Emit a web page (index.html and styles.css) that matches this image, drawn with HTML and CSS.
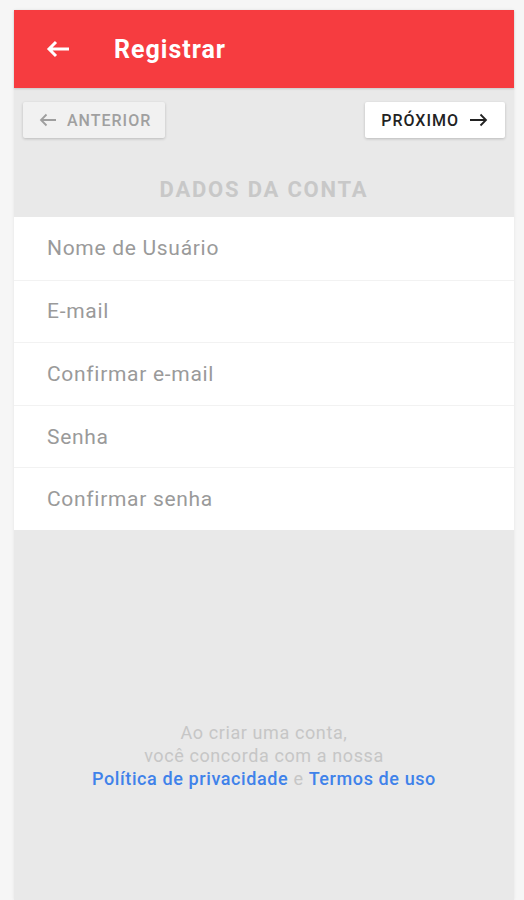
FILE: index.html
```html
<!DOCTYPE html>
<html>

<head>
    <meta charset="UTF-8" />
    <title>Registrar</title>
    <link rel="stylesheet" href="styles.css">
</head>

<body>
    <div class="screen">
        <header class="appbar">
            <svg class="back" width="24" height="18" viewBox="0 0 24 18">
                <path d="M23 9H3 M10 2L3 9l7 7" fill="none" stroke="#fff" stroke-width="3" />
            </svg>
            <span class="title">Registrar</span>
        </header>

        <div class="nav">
            <button class="btn prev">
                <svg width="17" height="14" viewBox="0 0 17 14">
                    <path d="M17 7H2 M7.5 1.5L2 7l5.5 5.5" fill="none" stroke="#9e9e9e" stroke-width="1.8" />
                </svg>
                ANTERIOR
            </button>
            <button class="btn next">
                PRÓXIMO
                <svg width="18" height="14" viewBox="0 0 18 14">
                    <path d="M0 7H16 M10.5 1.5L16 7l-5.5 5.5" fill="none" stroke="#222" stroke-width="1.8" />
                </svg>
            </button>
        </div>

        <div class="section-title">DADOS DA CONTA</div>

        <form class="card">
            <input class="field" type="text" placeholder="Nome de Usuário">
            <input class="field" type="email" placeholder="E-mail">
            <input class="field" type="email" placeholder="Confirmar e-mail">
            <input class="field" type="password" placeholder="Senha">
            <input class="field" type="password" placeholder="Confirmar senha">
        </form>

        <p class="terms">
            Ao criar uma conta,<br>
            você concorda com a nossa<br>
            <a href="#">Política de privacidade</a> e <a href="#">Termos de uso</a>
        </p>
    </div>
</body>

</html>
```

FILE: styles.css
```css
body {
    margin: 0;
    padding: 10px 10px 0 14px;
    background-color: #f6f6f6;
    font-family: Roboto, "Liberation Sans", sans-serif;
}

.screen {
    min-height: 890px;
    background-color: #e9e9e9;
    box-shadow: 0 0 3px rgba(0, 0, 0, 0.08);
}

.appbar {
    height: 78px;
    display: flex;
    align-items: center;
    padding-left: 32px;
    background-color: #f63c40;
    box-shadow: 0 1px 2px rgba(0, 0, 0, 0.15);
}

.appbar .back {
    margin-right: 44px;
}

.appbar .title {
    color: white;
    font-size: 25px;
    font-weight: bold;
    letter-spacing: 1px;
}

.nav {
    display: flex;
    justify-content: space-between;
    padding: 14px 9px 0 9px;
}

.btn {
    height: 36px;
    display: flex;
    align-items: center;
    gap: 11px;
    border: none;
    border-radius: 2px;
    font-family: Roboto, "Liberation Sans", sans-serif;
    font-size: 16px;
    font-weight: 500;
    letter-spacing: 1px;
    box-shadow: 0 1px 3px rgba(0, 0, 0, 0.2);
    cursor: pointer;
}

.prev {
    padding: 0 14px 0 16px;
    background-color: #f1f1f1;
    color: #a0a0a0;
}

.next {
    padding: 0 17px 0 16px;
    background-color: white;
    color: #222;
}

.section-title {
    padding: 40px 0 15px 0;
    line-height: 24px;
    text-align: center;
    color: #c8c8c8;
    font-size: 22px;
    font-weight: bold;
    letter-spacing: 1.8px;
}

.card {
    display: flex;
    flex-direction: column;
    background-color: white;
}

.field {
    height: 62.6px;
    box-sizing: border-box;
    padding: 0 0 0 33px;
    border: none;
    border-top: 1px solid #f2f2f2;
    outline: none;
    font-family: Roboto, "Liberation Sans", sans-serif;
    font-size: 21px;
    letter-spacing: 0.7px;
    background: transparent;
}

.field:first-child {
    border-top: none;
}

.field::placeholder {
    color: #9a9a9a;
}

.terms {
    margin: 191px 0 0 0;
    text-align: center;
    color: #c6c6c6;
    font-size: 18px;
    line-height: 23px;
    letter-spacing: 0.6px;
}

.terms a {
    color: #3f82ea;
    font-weight: 500;
    text-decoration: none;
}
```
